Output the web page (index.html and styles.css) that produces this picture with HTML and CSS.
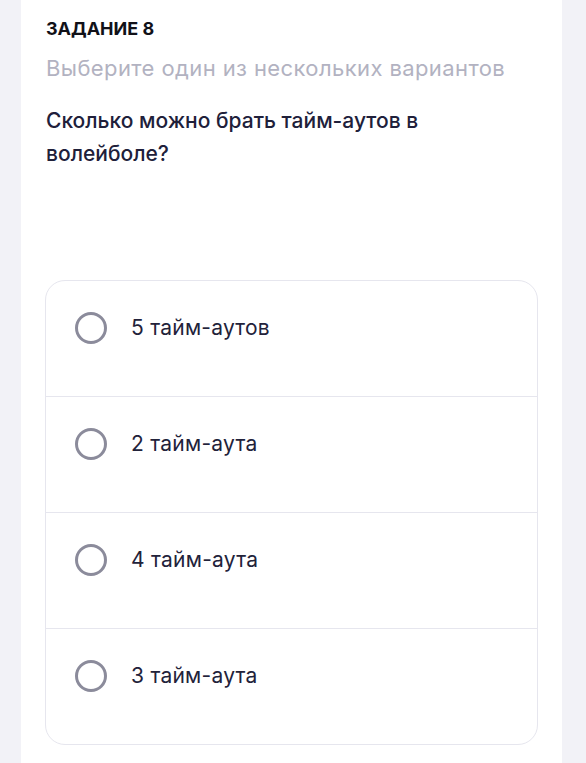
FILE: index.html
```html
<!DOCTYPE html>
<html lang="ru">
<head>
<meta charset="utf-8">
<link rel="stylesheet" href="styles.css">
</head>
<body>
<main class="panel">
  <div class="label">ЗАДАНИЕ 8</div>
  <div class="hint">Выберите один из нескольких вариантов</div>
  <div class="question">Сколько можно брать тайм-аутов в волейболе?</div>
  <ul class="options">
    <li class="option"><span class="radio"></span><span class="option-text">5 тайм-аутов</span></li>
    <li class="option"><span class="radio"></span><span class="option-text">2 тайм-аута</span></li>
    <li class="option"><span class="radio"></span><span class="option-text">4 тайм-аута</span></li>
    <li class="option"><span class="radio"></span><span class="option-text">3 тайм-аута</span></li>
  </ul>
</main>
</body>
</html>
```
FILE: styles.css
```css
* { box-sizing: border-box; }
html, body { margin: 0; padding: 0; }
body {
  background: #f2f2f7;
  font-family: Inter, "Noto Sans", sans-serif;
  height: 763px;
  overflow: hidden;
}
.panel {
  margin-left: 21px;
  width: 541px;
  min-height: 763px;
  background: #ffffff;
  padding: 17px 25px 0 25px;
}
.label {
  font-size: 18px;
  font-weight: 700;
  line-height: 24px;
  color: #111118;
}
.hint {
  margin-top: 14px;
  font-size: 22px;
  letter-spacing: 0.4px;
  line-height: 26px;
  color: #b2b2c1;
}
.question {
  margin-top: 23px;
  font-size: 21px;
  font-weight: 500;
  line-height: 33px;
  color: #20203a;
  width: 430px;
}
.options {
  list-style: none;
  margin: 110px 0 0 -1px;
  padding: 0;
  width: 493px;
  border: 1px solid #e6e6ee;
  border-radius: 20px;
}
.option {
  height: 116px;
  display: flex;
  align-items: flex-start;
  gap: 24px;
  padding: 31px 0 0 29px;
  border-top: 1px solid #e6e6ee;
}
.option:first-child { border-top: none; height: 115px; }
.radio {
  width: 32px;
  height: 32px;
  border: 3px solid #8b8b9b;
  border-radius: 50%;
  flex: none;
}
.option-text {
  font-size: 21px;
  letter-spacing: 0.25px;
  line-height: 31px;
  color: #22223a;
}
```
